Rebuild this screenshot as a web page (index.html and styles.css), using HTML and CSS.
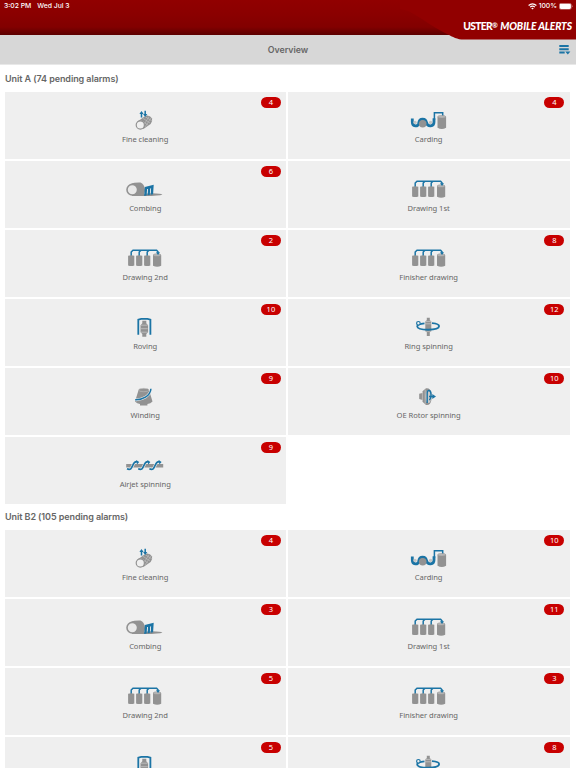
FILE: index.html
```
<!DOCTYPE html>
<html lang="en">
<head>
  <meta charset="UTF-8">
  <meta name="viewport" content="width=device-width, initial-scale=1.0">
  <link rel="stylesheet" href="styles.css">
  <title>USTER Mobile Alerts</title>
</head>
<body>

  <header class="app-header">
    <svg class="swoosh" width="176" height="40" viewBox="0 0 176 40">
      <path d="M0 0H176V39.6H64C57 39.6 53 37 47 34C34 28 22 18 8 11L0 9Z" fill="#910000"/>
    </svg>
    <div class="status-bar">
      <span>3:02 PM</span>
      <span class="status-date">Wed Jul 3</span>
      <span class="status-right">
        <svg width="9" height="7" viewBox="0 0 9 7" fill="none" stroke="#fff" stroke-width="1.2">
          <path d="M.6 2.5Q4.5-.9 8.4 2.5M2.1 4.1Q4.5 2.1 6.9 4.1"/>
          <path d="M3.2 5.2Q4.5 4.3 5.8 5.2L4.5 6.6Z" fill="#fff" stroke="none"/>
        </svg>
        <span>100%</span>
        <svg width="14" height="7" viewBox="0 0 14 7">
          <rect x=".3" y=".3" width="12" height="6" rx="1.7" fill="none" stroke="#d49a9a" stroke-width=".6"/>
          <rect x=".7" y=".7" width="11.2" height="5.2" rx="1.3" fill="#fff"/>
          <path d="M13 2.3Q14.2 3.3 13 4.3Z" fill="#d49a9a"/>
        </svg>
      </span>
    </div>
    <div class="logo"><span class="brand">USTER</span><span class="reg">®</span> <em>MOBILE ALERTS</em></div>
  </header>

  <nav class="title-bar">
    <h1>Overview</h1>
    <svg class="menu-icon" width="12" height="10" viewBox="0 0 12 10" fill="#1b74a5">
      <path d="M.3 0H9.7V2.1H.3ZM.3 3.2H9.7V5.3H.3ZM.3 6.4H5.7V8.5H.3ZM6.2 6.4H11.4L8.8 9.4Z"/>
    </svg>
  </nav>

  <main id="units"></main>

  <!-- Process icons -->
  <svg class="icon-defs" width="0" height="0">
    <symbol id="icon-cleaning" viewBox="0 0 40 26">
      <path d="M12.2 15.8L20.6 9.7Q24.8 8.8 27 12.4Q28 15.5 25.6 18L18.4 23Z" fill="#929292"/>
      <path d="M15 13.8L23 19M17.5 12L25 17M20 10.5L27 15M17 22L24 10.5M20 21L26 12" stroke="#c4c4c4" stroke-width=".6"/>
      <circle cx="15.3" cy="19" r="4.1" fill="#efefef" stroke="#929292" stroke-width="1.2"/>
      <path d="M16.5 11.5V6.8M20.2 4.8V9.3" stroke="#1b74a5" stroke-width="1.5"/>
      <path d="M14.4 8L16.5 5L18.6 8ZM18.1 8H22.3L20.2 11Z" fill="#1b74a5"/>
    </symbol>
    <symbol id="icon-carding" viewBox="0 0 40 26">
      <path d="M3.3 12.6V16C3.3 21 8.8 21 9.7 17.3C10.4 11.8 16.8 11.8 17.7 17.2C18.7 21 25 21 25 16V12.2" fill="none" stroke="#1b74a5" stroke-width="2.8"/>
      <circle cx="13.7" cy="17.8" r="3.8" fill="#929292"/>
      <circle cx="6" cy="16.4" r="1.7" fill="#c4c4c4"/>
      <circle cx="21.6" cy="16.4" r="1.7" fill="#c4c4c4"/>
      <path d="M25.4 14V6.8H33.7V10.5" fill="none" stroke="#1b74a5" stroke-width="1.5"/>
      <path d="M28.5 10.8V21.8Q32.8 24.3 37.1 21.8V10.8Z" fill="#929292"/>
      <ellipse cx="32.8" cy="10.8" rx="4.1" ry="1.3" fill="#b8b8b8" stroke="#929292" stroke-width=".6"/>
    </symbol>
    <symbol id="icon-combing" viewBox="0 0 40 26">
      <path d="M13 20.6Q18 18.2 27 18.3Q36 18.5 37.4 19.5Q34 21.3 13 20.9Z" fill="#929292"/>
      <path d="M6.5 8.5Q9 7.3 15.5 7.5C20.5 9.5 21.5 18 17.5 20.9H7Z" fill="#929292"/>
      <circle cx="7.3" cy="14.7" r="5.3" fill="#e9e9e9" stroke="#929292" stroke-width="1.6"/>
      <path d="M19.8 12L28.7 9.8L28.1 19.3L25.7 19.8L26.1 13.2L25.2 13.4L24.8 20L22.6 20.3L23 13.9L22.1 14.1L21.6 20.5L19.2 21Z" fill="#1b74a5"/>
    </symbol>
    <symbol id="icon-drawing" viewBox="0 0 40 26">
      <path d="M6.2 12V8L8 6.2H31.6L33 7.8V9.5M14.2 12V8L16 6.2M22.2 12V8L24 6.2" fill="none" stroke="#1b74a5" stroke-width="1.5"/>
      <path d="M3.1 11.8Q6.2 10.8 9.3 11.8V21.4Q6.2 22.8 3.1 21.4ZM11.1 11.8Q14.2 10.8 17.3 11.8V21.4Q14.2 22.8 11.1 21.4ZM19.1 11.8Q22.2 10.8 25.3 11.8V21.4Q22.2 22.8 19.1 21.4ZM28 11V21.7Q32.2 23.8 36.2 21.7V11Z" fill="#929292"/>
      <ellipse cx="32.1" cy="11" rx="3.9" ry="1.3" fill="#b8b8b8" stroke="#929292" stroke-width=".5"/>
      <path d="M31 8.3H35L33 11Z" fill="#1b74a5"/>
    </symbol>
    <symbol id="icon-roving" viewBox="0 0 40 26">
      <path d="M13.3 21.8V6.6L16.2 5.8H22.5L25.4 6.6V21.8" fill="none" stroke="#1b74a5" stroke-width="1.8"/>
      <path d="M17.3 7.8H21.3V10.3L23.1 12.2V19.2L21.3 21V23.8H17.3V21L15.5 19.2V12.2L17.3 10.3Z" fill="#929292"/>
      <path d="M16 12.2H22.7M16 15.7H22.7M16 19.2H22.7" stroke="#ccc" stroke-width=".7"/>
    </symbol>
    <symbol id="icon-ring" viewBox="0 0 40 26">
      <path d="M17.8 4.8H20.8V7.2L22.3 8.3V18.2L20.8 19.3V23H17.8V19.3L16.3 18.2V8.3L17.8 7.2Z" fill="#929292"/>
      <path d="M16.3 8.4H22.3M16.3 10.8H22.3M16.3 18.2H22.3" stroke="#d5d5d5" stroke-width=".6"/>
      <path d="M15.5 10.3C10.5 10.8 8 12 8.2 13.4C8.8 17.9 29.7 17.9 30.1 13.2C30.2 11.6 27 10.6 23 10.2" fill="none" stroke="#1b74a5" stroke-width="1.8"/>
      <circle cx="9.4" cy="10.3" r="1.8" fill="#efefef" stroke="#1b74a5" stroke-width="1.2"/>
    </symbol>
    <symbol id="icon-winding" viewBox="0 0 40 26">
      <path d="M13.6 8L10 19.5Q12 21.7 15 22V23.4H22.4V22Q25.7 21.7 27.5 19.5L24 8Z" fill="#929292"/>
      <ellipse cx="18.8" cy="8" rx="5.2" ry="1.7" fill="#929292" stroke="#c4c4c4" stroke-width=".5"/>
      <path d="M10.3 17.8C17 18.2 25.5 14.2 25.9 6.8" fill="none" stroke="#efefef" stroke-width="2.6"/>
      <path d="M10.2 17.8C17 18.2 25.5 14.2 25.9 6.8" fill="none" stroke="#1b74a5" stroke-width="1.5"/>
    </symbol>
    <symbol id="icon-rotor" viewBox="0 0 40 26">
      <path d="M10.2 11.8L13.5 11V9.3L17 6.3Q21.4 5.6 22.4 11V18Q21.5 23.8 17 23L13.5 19.7V18L10.2 17Z" fill="#929292"/>
      <path d="M13.4 10V19M16.2 7.5V21.8" stroke="#d0d0d0" stroke-width=".6"/>
      <ellipse cx="19.4" cy="14.5" rx="2.8" ry="6.6" fill="#c9c9c9"/>
      <path d="M18.2 21V11Q18.4 8.3 20.1 8.5Q22 8.8 22 12.5Q22 17 20.2 17.8M20 14.5H24" fill="none" stroke="#1b74a5" stroke-width="1.4"/>
      <path d="M23.3 11.9L27 14.5L23.3 17.1Z" fill="#1b74a5"/>
    </symbol>
    <symbol id="icon-airjet" viewBox="0 0 40 26">
      <path d="M1.2 12.9H38.2V16.5H1.2Z" fill="#929292"/>
      <path d="M2 17.8C8.8 21 6.3 9.5 12.3 10.7M13.2 17.8C20 21 17.5 9.5 23.5 10.7M24.4 17.8C31.2 21 28.7 9.5 34.7 10.7" fill="none" stroke="#efefef" stroke-width="2.8"/>
      <path d="M2 17.8C8.8 21 6.3 9.5 12.3 10.7M13.2 17.8C20 21 17.5 9.5 23.5 10.7M24.4 17.8C31.2 21 28.7 9.5 34.7 10.7" fill="none" stroke="#1b74a5" stroke-width="1.6"/>
      <path d="M11.2 9L14.2 11L12 13.4ZM22.4 9L25.4 11L23.2 13.4ZM33.6 9L36.6 11L34.4 13.4Z" fill="#1b74a5"/>
    </symbol>
  </svg>

  <script>
    var machines = [
      ['Fine cleaning', 'cleaning'],
      ['Carding', 'carding'],
      ['Combing', 'combing'],
      ['Drawing 1st', 'drawing'],
      ['Drawing 2nd', 'drawing'],
      ['Finisher drawing', 'drawing'],
      ['Roving', 'roving'],
      ['Ring spinning', 'ring'],
      ['Winding', 'winding'],
      ['OE Rotor spinning', 'rotor'],
      ['Airjet spinning', 'airjet']
    ];

    // Pending alarms per machine, 0 = no badge
    var units = [
      { title: 'Unit A (74 pending alarms)', alarms: [4, 4, 6, 0, 2, 8, 10, 12, 9, 10, 9] },
      { title: 'Unit B2 (105 pending alarms)', alarms: [4, 10, 3, 11, 5, 3, 5, 8] }
    ];

    var html = '';
    units.forEach(function (unit) {
      html += `<section class="unit"><h2>${unit.title}</h2><div class="tiles">`;
      unit.alarms.forEach(function (count, i) {
        var badge = count ? `<span class="badge">${count}</span>` : '';
        html += `<div class="tile">
          <svg class="tile-icon"><use href="#icon-${machines[i][1]}"/></svg>
          <span class="tile-name">${machines[i][0]}</span>${badge}
        </div>`;
      });
      html += '</div></section>';
    });
    document.getElementById('units').innerHTML = html;
  </script>

</body>
</html>
```
FILE: styles.css
```
* {
  box-sizing: border-box;
}

body {
  margin: 0;
  height: 768px;
  overflow: hidden;
  background-color: #fff;
  color: #666;
  font-family: "Noto Sans", sans-serif;
}

.app-header {
  position: relative;
  z-index: 1;
  height: 35px;
  background: linear-gradient(#910000 0, #8a0000 15px, #820000 27px, #5c0000 35px);
  color: #fff;
}

/* Red corner that hangs over the title bar */
.swoosh {
  position: absolute;
  top: 0;
  right: 0;
}

.status-bar {
  position: relative;
  display: flex;
  align-items: center;
  height: 12px;
  padding: 0 3px 0 4px;
  font: 500 6.8px/12px Inter, sans-serif;
}

.status-date {
  margin-left: 6px;
}

.status-right {
  display: flex;
  align-items: center;
  gap: 2px;
  margin-left: auto;
}

.logo {
  position: relative;
  padding: 6px 4px 0 0;
  text-align: right;
  font: 900 10.3px/15px Lato, sans-serif;
  white-space: nowrap;
}

.brand {
  letter-spacing: -0.7px;
}

.reg {
  font-weight: 700;
  font-size: 7px;
  vertical-align: 2px;
}

.logo em {
  letter-spacing: -0.1px;
}

.title-bar {
  display: grid;
  grid-template-columns: 1fr auto 1fr;
  align-items: center;
  height: 30px;
  padding: 0 5px;
  background-color: #d7d7d7;
  border-bottom: 1px solid #e8e8e8;
}

.title-bar h1 {
  grid-column: 2;
  margin: 0;
  font: 600 8.8px/14px Inter, sans-serif;
}

.menu-icon {
  justify-self: end;
}

.unit h2 {
  margin: 0;
  padding-left: 5px;
  font: 600 9px/26px Inter, sans-serif;
  letter-spacing: -0.08px;
}

#units {
  padding-top: 1px;
}

.tiles {
  display: grid;
  grid-template-columns: 281.4px 281.4px;
  grid-auto-rows: 67px;
  gap: 2px;
  padding-left: 5px;
}

.tile {
  position: relative;
  display: flex;
  flex-direction: column;
  align-items: center;
  padding-top: 14px;
  background-color: #efefef;
}

.tile-icon {
  width: 40px;
  height: 26px;
  margin-right: 1px;
}

.tile-name {
  margin-right: 1px;
  font-size: 7.6px;
  line-height: 15px;
  letter-spacing: -0.05px;
}

.badge {
  position: absolute;
  top: 5px;
  right: 5.5px;
  width: 20px;
  height: 11px;
  border-radius: 6px;
  background-color: #c80000;
  color: #fff;
  font-size: 7.5px;
  line-height: 11px;
  text-align: center;
}
```
